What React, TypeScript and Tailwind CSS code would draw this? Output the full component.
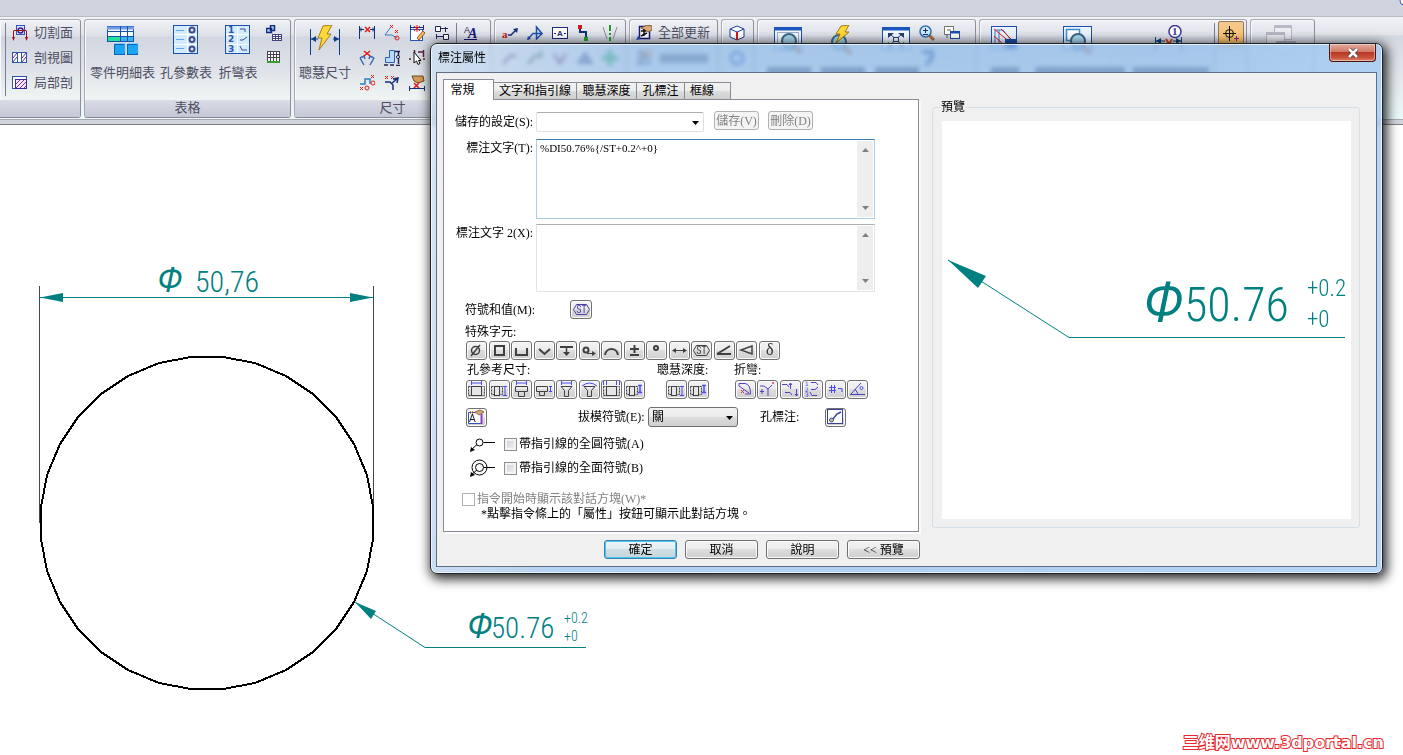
import type { ReactNode } from "react";

type IconProps = { w?: number; h?: number; className?: string; children: ReactNode };

function Icon({ w = 16, h = 16, className = "", children }: IconProps) {
  return (
    <svg width={w} height={h} viewBox={`0 0 ${w} ${h}`} fill="none" aria-hidden="true" className={`shrink-0 ${className}`}>
      {children}
    </svg>
  );
}

/* ---------- ribbon icons ---------- */

const sectionIcon = (
  <Icon>
    <rect x="4.500" y="0.500" width="8" height="9" fill="#dbe4ff" stroke="#3355b5" />
    <circle cx="8.500" cy="5.500" r="2.500" stroke="#4a1a8a" strokeWidth="1.500" />
    <path d="M1.500 6V14M14.500 6V14M1.500 5.500H14.500" stroke="#a01010" />
    <path d="M0 12H3L1.500 16ZM13 12H16L14.500 16Z" fill="#a01010" />
  </Icon>
);

const breakIcon = (
  <Icon>
    <rect x="0.500" y="2.500" width="14" height="10" fill="#fff" stroke="#2d55b0" />
    <path d="M1 8L5 3M1 12L5 7M10 8L14 3M10 12L14 7" stroke="#6a2fb0" />
    <path d="M5.500 3V12M9.500 3V12" stroke="#2d55b0" />
  </Icon>
);

const brokenOutIcon = (
  <Icon>
    <rect x="0.500" y="1.500" width="14" height="12" fill="#fff" stroke="#2d55b0" />
    <rect x="3.500" y="4.500" width="11" height="9" fill="#f3e9ff" stroke="#3b2a95" />
    <path d="M4 9L8 5M4 13L12 5M8 13L14 7M12 13L14 11" stroke="#7a28b8" />
  </Icon>
);

const partsListIcon = (
  <Icon w={32} h={30}>
    <rect x="0.500" y="1.500" width="26" height="15" fill="#f2fbff" stroke="#1c4fae" />
    <rect x="1" y="11" width="13" height="5" fill="#1fe49c" />
    <rect x="14" y="11" width="12" height="5" fill="#39b3ee" />
    <path d="M0 3H27" stroke="#6d9be8" strokeWidth="3" />
    <path d="M0 6.500H27M0 11.500H27M13.500 1V17M20.500 1V17" stroke="#1c4fae" />
    <rect x="7.500" y="19.500" width="10" height="10" fill="#18a5f2" stroke="#0e62bd" />
    <rect x="20.500" y="19.500" width="10" height="10" fill="#18a5f2" stroke="#0e62bd" />
    <path d="M8 18.500H18V28M21 18.500H31V28" stroke="#7fd2ff" />
  </Icon>
);

const holeTableIcon = (
  <Icon w={26} h={30}>
    <rect x="0.500" y="0.500" width="24" height="28" fill="#d3ebff" stroke="#1c4fae" />
    <path d="M14.500 1V28M1 9.500H24M1 19.500H24" stroke="#fff" />
    <path d="M3 5.500H11M3 14.500H11M3 23.500H11" stroke="#5da9ee" />
    <g stroke="#434a86" strokeWidth="2">
      <circle cx="19" cy="5" r="2.500" />
      <circle cx="19" cy="14.500" r="2.500" />
      <circle cx="19" cy="24" r="2.500" />
    </g>
  </Icon>
);

const bendTableIcon = (
  <Icon w={26} h={30}>
    <rect x="0.500" y="0.500" width="24" height="28" fill="#d3ebff" stroke="#1c4fae" />
    <path d="M12.500 1V28M1 9.500H24M1 19.500H24" stroke="#fff" />
    <g fill="#2f57a5" fontFamily="DejaVu Sans" fontWeight="700" fontSize="9">
      <text x="3" y="8">1</text>
      <text x="3" y="17">2</text>
      <text x="3" y="27">3</text>
    </g>
    <path d="M15 4H20V7M15 15H18L22 12M15 21L17 25H22" stroke="#434a86" />
  </Icon>
);

const blockTableIcon = (
  <Icon>
    <path d="M0.500 3.500H5.500V7.500H0.500ZM4.500 0.500H8.500V5.500H4.500Z" fill="#9fd4ff" stroke="#16277c" strokeWidth="1.500" />
    <rect x="6.500" y="9.500" width="9" height="6" fill="#fff" stroke="#43447f" />
    <path d="M6 11.500H16M6 13.500H16M9.500 9V16M12.500 9V16" stroke="#43447f" />
  </Icon>
);

const tableIcon = (
  <Icon>
    <rect x="1.500" y="1.500" width="12" height="11" fill="#fff" stroke="#4b4252" />
    <path d="M1 4.500H14M1 7.500H14M4.500 1V13M7.500 1V13M10.500 1V13" stroke="#4b4252" />
    <path d="M1 12H14" stroke="#3f9c34" strokeWidth="2" />
  </Icon>
);

const smartDimIcon = (
  <Icon w={34} h={32}>
    <path d="M2.500 4V30M31.500 4V30" stroke="#10407f" />
    <path d="M3 14H10M25 14H31" stroke="#10407f" />
    <path d="M3 14L8 11V17ZM31 14L26 11V17Z" fill="#10407f" />
    <path d="M15 1L24 0L19 9H23L11 25L14 13H10Z" fill="#ffd83a" stroke="#a67a10" />
  </Icon>
);

const dimIcons: ReactNode[] = [
  <Icon key="between">
    <path d="M0.500 1V14M15.500 1V14M1 4.500H5M11 4.500H15" stroke="#14307a" />
    <path d="M2 2.500V6.500M14 2.500V6.500" stroke="#14307a" />
    <path d="M6 2L11 7M11 2L6 7" stroke="#e01818" strokeWidth="1.500" />
  </Icon>,
  <Icon key="angleCoord">
    <path d="M1 10L6 3M1 10H8L13 13" stroke="#3a7ac0" />
    <path d="M6 0L9 3M9 0L6 3M11 5L14 8M14 5L11 8" stroke="#e01818" />
    <circle cx="13" cy="13" r="2" stroke="#e01818" />
  </Icon>,
  <Icon key="attach">
    <rect x="1.500" y="4.500" width="12" height="11" fill="#fff" stroke="#2456b0" />
    <path d="M1.500 0V5M14.500 0V5M2 2.500H14" stroke="#14307a" />
    <path d="M5 1L11 6M11 1L5 6M8 0V7" stroke="#e01818" />
    <path d="M8 13L14 6L16 8L10 15Z" fill="#f6bd50" stroke="#a3532a" />
  </Icon>,
  <Icon key="retrieve">
    <path d="M1.500 1.500H6.500V6.500H1.500ZM9.500 9.500H14.500V14.500H9.500Z" fill="#fff" stroke="#23234f" />
    <path d="M7 3.500H14M11.500 2V7M2.500 9V14M2 11.500H9" stroke="#23234f" />
  </Icon>,
  <Icon key="anglebetween">
    <path d="M1 8L5 15M15 8L11 15M1 8L5 6L6 9M15 8L11 6L10 9" stroke="#3769b5" strokeWidth="1.500" />
    <path d="M5 1L11 6M11 1L5 6" stroke="#e01818" strokeWidth="1.500" />
  </Icon>,
  <Icon key="symmetric">
    <path d="M1.500 7.500V12.500H10.500V0.500H5.500V7.500Z" fill="#b9d8f6" stroke="#2a63ad" />
    <path d="M0 15H4M6 15H10M14.500 1V14M11 1.500H16M12 15.500H16" stroke="#23234f" strokeWidth="1.500" />
    <circle cx="14" cy="7" r="1.500" fill="#fff" stroke="#23234f" />
  </Icon>,
  <Icon key="select">
    <path d="M0 9H2M5.500 0V3M14.500 0V7M9 2H14M14 9H16" stroke="#5c2230" strokeWidth="1.500" />
    <path d="M5 2V13L7.500 11L9 14.500L11 13.500L9.500 10.500H12Z" fill="#fff" stroke="#111" />
  </Icon>,
  null,
  <Icon key="coordinate">
    <path d="M1 9H6V4H11V9" stroke="#2d7ec6" strokeWidth="1.500" />
    <path d="M12 0L15 3M15 0L12 3M1 12L4 15M4 12L1 15" stroke="#e01818" />
    <circle cx="14" cy="8" r="2" stroke="#e01818" />
    <circle cx="8" cy="13" r="2" stroke="#e01818" />
  </Icon>,
  <Icon key="chamfer">
    <path d="M1 1L4 4M4 1L1 4M7 1L10 4M10 1L7 4" stroke="#e01818" />
    <path d="M1 7H6L9 10V15M7 9L14 3M9 4L14 3L13 8" stroke="#14307a" strokeWidth="1.500" />
  </Icon>,
  <Icon key="linefit">
    <path d="M3 1H14L15 6L9 8L5 6Z" fill="#d59a55" stroke="#6d4a20" />
    <path d="M5 8L10 13M10 8L5 13" stroke="#e01818" strokeWidth="1.500" />
    <path d="M0.500 11V16M15.500 11V16M1 13.500H15" stroke="#14307a" />
  </Icon>,
  null,
];

const annotationIcons: ReactNode[] = [
  <Icon key="leader">
    <text x="0" y="13" fill="#c01818" fontFamily="Liberation Serif" fontWeight="700" fontSize="11">a</text>
    <path d="M6 10H9L14 5" stroke="#14307a" strokeWidth="1.500" />
    <path d="M16 3L11 4L15 8Z" fill="#14307a" />
  </Icon>,
  <Icon key="balloon">
    <path d="M1 14L6 8.500H15L9.500 2V14L15 8.500" stroke="#1c4fae" strokeWidth="1.500" />
    <path d="M0 15L1 11L4 14Z" fill="#1c4fae" />
  </Icon>,
  <Icon key="frame">
    <rect x="0.500" y="2.500" width="15" height="11" fill="#fff" stroke="#1c2c86" />
    <text x="5" y="11" fill="#1c2c86" fontFamily="Liberation Sans" fontWeight="700" fontSize="8">A</text>
    <path d="M2 8.500H4M12 8.500H14" stroke="#1c2c86" />
  </Icon>,
  <Icon key="connector">
    <path d="M3 2V7H9V13" stroke="#14307a" strokeWidth="2" />
    <rect x="1" y="0" width="4" height="4" fill="#d01919" />
    <rect x="7" y="12" width="4" height="4" fill="#25a52a" />
  </Icon>,
  <Icon key="centerline">
    <path d="M1 2L5 14M15 2L11 14" stroke="#8b8b9b" />
    <path d="M8 0V6M8 8V10M8 12V16" stroke="#1f9c27" strokeWidth="2" />
  </Icon>,
];

const secondRowIcons: ReactNode[] = [
  <Icon key="l1"><path d="M1 14L8 6H15" stroke="#4a1a80" strokeWidth="3" /></Icon>,
  <Icon key="l2"><path d="M1 14L8 6H14V1" stroke="#1f5040" strokeWidth="3" /></Icon>,
  <Icon key="l3"><path d="M2 4L8 13L14 4" stroke="#5a1a60" strokeWidth="3" /></Icon>,
  <Icon key="l4"><path d="M1 13H15L8 3Z" fill="#4656a8" stroke="#14307a" strokeWidth="2" /></Icon>,
  <Icon key="l5"><path d="M8 0V16M0 8H16" stroke="#0f9c47" strokeWidth="5" /></Icon>,
];

const textStyleIcon = (
  <Icon>
    <text x="0" y="8" fill="#23234f" fontFamily="Liberation Sans" fontSize="9">A</text>
    <text x="4" y="13" fill="#16167c" fontFamily="Liberation Serif" fontStyle="italic" fontWeight="700" fontSize="14">A</text>
    <path d="M0 14.500H13" stroke="#16167c" />
  </Icon>
);

const updateIcon = (
  <Icon>
    <rect x="3.500" y="1.500" width="10" height="12" fill="#fff" stroke="#16167c" strokeWidth="1.500" />
    <path d="M5 3L11 0L16 1V5L12 7Z" fill="#d9a877" stroke="#7d5a30" />
    <path d="M5 6H10M8 4V11M5 11L11 8" stroke="#111" strokeWidth="1.500" />
    <path d="M0 15L2 11L5 14Z" fill="#1c4fae" />
  </Icon>
);

const cubeIcon = (
  <Icon>
    <path d="M8 1L15 4V12L8 15L1 12V4Z" fill="#fff" stroke="#1c3fa0" />
    <path d="M1 4L8 7L15 4" stroke="#1c3fa0" />
    <path d="M8 7V15" stroke="#d01919" strokeWidth="2" />
  </Icon>
);

function Magnifier({ x, y }: { x: number; y: number }) {
  return (
    <g>
      <path d={`M${x + 5} ${y + 5}L${x + 12} ${y + 12}`} stroke="#a6623c" strokeWidth="4" />
      <circle cx={x} cy={y} r="7" fill="#a9d8ee" stroke="#3c6b8c" strokeWidth="2" />
    </g>
  );
}

const zoomAreaIcon = (
  <Icon w={32} h={32}>
    <rect x="1.500" y="2.500" width="27" height="22" fill="#f4faff" stroke="#1c4fae" />
    <path d="M1 4H29" stroke="#1c57c0" strokeWidth="3" />
    <rect x="4.500" y="7.500" width="21" height="16" stroke="#9ab0d0" />
    <Magnifier x={16} y={16} />
  </Icon>
);

const zoomToolIcon = (
  <Icon w={32} h={32}>
    <Magnifier x={12} y={17} />
    <path d="M14 1L22 0L18 7H22L9 18L13 9H9Z" fill="#ffd83a" stroke="#a67a10" />
  </Icon>
);

const fitIcon = (
  <Icon w={32} h={32}>
    <rect x="1.500" y="2.500" width="27" height="22" fill="#f4faff" stroke="#1c4fae" />
    <path d="M1 4H29" stroke="#1c57c0" strokeWidth="3" />
    <path d="M9 9L21 20M21 9L9 20" stroke="#20407f" />
    <path d="M7 8H13L7 13ZM23 8H17L23 13ZM7 22H13L7 17ZM23 22H17L23 17Z" fill="#20407f" />
    <rect x="12.500" y="12.500" width="5" height="4" fill="#fff" stroke="#20407f" />
  </Icon>
);

const zoomIcon = (
  <Icon>
    <path d="M10 10L15 15" stroke="#b0663a" strokeWidth="3" />
    <circle cx="6.500" cy="6.500" r="5.500" fill="#cdeaff" stroke="#2f6fb0" strokeWidth="1.500" />
    <path d="M4 5.500H9M6.500 3V8M4 9.500H9" stroke="#1d2b70" />
  </Icon>
);

const cascadeIcon = (
  <Icon>
    <rect x="0.500" y="1.500" width="9" height="8" fill="#fff" stroke="#74747c" />
    <path d="M3 5H7M3 9V13" stroke="#555" />
    <rect x="6.500" y="6.500" width="9" height="7" fill="#fff" stroke="#1c4fae" />
    <path d="M6 7.500H16" stroke="#1c4fae" strokeWidth="2" />
  </Icon>
);

const hatchViewIcon = (
  <Icon w={32} h={32}>
    <rect x="0.500" y="1.500" width="25" height="22" fill="#eaf4ff" stroke="#1c4fae" />
    <path d="M4 5V20H22M4 5H12L24 20M8 5V20" stroke="#3a7ac0" />
    <path d="M3 4L20 18M10 4L24 18M3 11L12 19" stroke="#e01818" />
    <rect x="14" y="14" width="11" height="10" fill="#1c4fae" />
  </Icon>
);

const inspectIcon = (
  <Icon w={32} h={32}>
    <rect x="0.500" y="1.500" width="28" height="23" fill="#eaf4ff" stroke="#1c4fae" />
    <rect x="3.500" y="4.500" width="13" height="11" fill="#fff" stroke="#3a8fd0" strokeWidth="1.500" />
    <Magnifier x={15} y={16} />
  </Icon>
);

const trackDimIcon = (
  <Icon w={32} h={32}>
    <path d="M0.500 12V26M26.500 12V26M1 16H10M18 16H26" stroke="#10407f" />
    <path d="M1 16L6 13V19ZM26 16L21 13V19Z" fill="#10407f" />
    <path d="M11 14L14 19L17 14" stroke="#d2401c" strokeWidth="2" />
    <circle cx="20" cy="6.500" r="6" fill="#fff" stroke="#3a389a" strokeWidth="1.500" />
    <text x="17" y="10" fill="#3a389a" fontFamily="Liberation Serif" fontWeight="700" fontSize="11">1</text>
  </Icon>
);

const crosshairIcon = (
  <Icon w={20} h={20}>
    <circle cx="8.500" cy="9.500" r="4" stroke="#111" />
    <path d="M8.500 2V17M2 9.500H15" stroke="#111" />
    <path d="M15.500 12V17M13 14.500H18" stroke="#8a1a8a" />
  </Icon>
);

const switchWindowIcon = (
  <Icon w={30} h={32} className="opacity-50">
    <rect x="8.500" y="1.500" width="17" height="14" fill="#f3f3fa" stroke="#8c88a2" />
    <path d="M8 2.500H26" stroke="#8c88a2" strokeWidth="3" />
    <rect x="0.500" y="8.500" width="18" height="15" fill="#f3f3fa" stroke="#8c88a2" />
    <path d="M0 9.500H19" stroke="#8c88a2" strokeWidth="3" />
    <rect x="10.500" y="17.500" width="19" height="10" fill="#f3f3fa" stroke="#8c88a2" />
    <path d="M10 18.500H30" stroke="#8c88a2" strokeWidth="3" />
  </Icon>
);

/* ---------- ribbon ---------- */

const GROUP =
  "shrink-0 h-[99px] flex flex-col rounded-[3px] border border-[#a9a9b4] border-r-[#8f8f9b] border-b-[#8a8a96] shadow-[inset_1px_1px_0_#f8f9fb] bg-[linear-gradient(#eff1f5_0px,#dde0e7_16px,#d2d6e1_17px,#dfe3e8_50px,#f0f5f4_80px)] overflow-hidden";

const SEPARATOR = "mt-[3px] h-[73px] w-px shrink-0 bg-[#7b7c93]";

function Group({ className, title, children }: { className: string; title?: string; children: ReactNode }) {
  return (
    <section className={`${GROUP} ${className}`}>
      <div className="flex flex-1">{children}</div>
      <div className="h-[17px] bg-linear-to-b from-[#dadce7] to-[#c4c8d6] text-center leading-4">{title}</div>
    </section>
  );
}

function BigButton({ icon, label, className }: { icon: ReactNode; label: string; className: string }) {
  return (
    <button type="button" className={`flex flex-col items-center pt-[5px] whitespace-nowrap ${className}`}>
      <span className="flex h-9 items-start">{icon}</span>
      <span className="leading-4 pt-1">{label}</span>
    </button>
  );
}

function Ribbon() {
  const sections = [
    { icon: sectionIcon, label: "切割面" },
    { icon: breakIcon, label: "剖視圖" },
    { icon: brokenOutIcon, label: "局部剖" },
  ];

  return (
    <header className="overflow-hidden text-[13px] text-[#4d4e63]">
      <div className="flex h-4 justify-end bg-[#cfd4de]">
        <Icon w={4} h={8}>
          <circle cx="5" cy="1" r="4" fill="#fff" stroke="#3a55c0" />
        </Icon>
      </div>

      <div className="flex h-[103px] gap-[3px] border-t border-[#b9bbbf] bg-[linear-gradient(#f1f2f6_0px,#e2e4ea_18px,#d3d7e1_19px,#e4e8ec_60px,#eaf8f8_100px)] pt-[2px]">
        <Group className="w-[81px] border-l-0 rounded-l-none">
          <div className={`ml-[5px] ${SEPARATOR}`} />
          <div className="flex flex-col gap-[9px] pl-[6px] pt-[5px]">
            {sections.map((item) => (
              <button key={item.label} type="button" className="flex h-4 items-center gap-[6px]">
                {item.icon}
                {item.label}
              </button>
            ))}
          </div>
        </Group>

        <Group className="w-[207px]" title="表格">
          <BigButton icon={partsListIcon} label="零件明細表" className="w-[75px]" />
          <BigButton icon={holeTableIcon} label="孔參數表" className="w-[52px]" />
          <BigButton icon={bendTableIcon} label="折彎表" className="w-[52px]" />
          <div className="flex flex-col gap-[9px] pl-[2px] pt-[5px]">
            <button type="button" aria-label="塊表格">{blockTableIcon}</button>
            <button type="button" aria-label="表格">{tableIcon}</button>
          </div>
        </Group>

        <Group className="w-[197px]" title="尺寸">
          <BigButton icon={smartDimIcon} label="聰慧尺寸" className="w-[60px]" />
          <div className="grid grid-cols-4 content-start gap-[9px] pl-[4px] pt-[5px]">
            {dimIcons.map((icon, i) => (
              <span key={i} className="h-4 w-4">{icon}</span>
            ))}
          </div>
          <div className={`ml-[6px] ${SEPARATOR}`} />
          <div className="pl-[7px] pt-[5px]">{textStyleIcon}</div>
        </Group>

        <Group className="w-[132px]">
          <div className="grid flex-1 grid-cols-5 content-start justify-items-center gap-y-[9px] px-[2px] pt-[5px]">
            {annotationIcons}
            {secondRowIcons}
          </div>
        </Group>

        <Group className="w-[89px]">
          <div className="flex flex-col gap-[9px] pl-[6px] pt-[5px]">
            <button type="button" className="flex h-4 items-center gap-[6px]">
              {updateIcon}
              全部更新
            </button>
            <div className="flex h-4 items-center gap-[8px]">
              {updateIcon}
              <span className="h-[9px] w-12 bg-[#2d3a5a]/70" />
            </div>
          </div>
        </Group>

        <Group className="w-[33px]">
          <div className="flex flex-col gap-[9px] pl-[7px] pt-[5px]">
            {cubeIcon}
            <Icon>
              <circle cx="8" cy="8" r="6" stroke="#2a58b8" strokeWidth="3" />
            </Icon>
          </div>
        </Group>

        <Group className="w-[219px]">
          <div className="flex gap-[22px] pl-[15px] pt-[5px]">
            {[zoomAreaIcon, zoomToolIcon, fitIcon].map((icon, i) => (
              <div key={i} className="flex w-8 flex-col items-center gap-[10px]">
                {icon}
                <span className="h-[10px] w-11 shrink-0 bg-[#1d2a4a]/80" />
              </div>
            ))}
          </div>
          <div className="pl-[6px] pt-[5px]">
            {zoomIcon}
            <Icon className="mt-[9px]">
              <path d="M3 2H13V8L7 15" stroke="#1a4c9e" strokeWidth="4" />
            </Icon>
          </div>
          <div className="pl-[9px] pt-[5px]">{cascadeIcon}</div>
        </Group>

        <Group className="w-[268px]">
          <div className="flex pl-[11px] pt-[5px]">
            <div className="flex w-[72px] flex-col gap-[10px]">
              {hatchViewIcon}
              <span className="h-[10px] w-7 bg-[#1d2a4a]/80" />
            </div>
            <div className="flex w-[92px] flex-col gap-[10px]">
              {inspectIcon}
              <span className="-ml-[28px] h-[10px] w-[90px] bg-[#1d2a4a]/80" />
            </div>
            <div className="flex w-[59px] flex-col gap-[10px]">
              {trackDimIcon}
              <span className="-ml-[22px] h-[10px] w-[76px] bg-[#1d2a4a]/80" />
            </div>
          </div>
          <div className={SEPARATOR} />
          <button type="button" aria-label="智慧點選" className="ml-[3px] mt-[1px] flex h-[26px] w-[26px] shrink-0 items-center justify-center rounded-[2px] border border-[#8e7a5c] bg-linear-to-b from-[#f2c98f] to-[#ffc05c]">
            {crosshairIcon}
          </button>
        </Group>

        <Group className="w-[65px]">
          <div className="pl-[15px] pt-[4px]">{switchWindowIcon}</div>
        </Group>
      </div>
      <div className="h-[6px] border-b border-t border-b-[#7f7f86] border-t-[#a8a8b2] bg-[#d0d4dd]" />
    </header>
  );
}

/* ---------- drafting sheet ---------- */

const DRAFT_FONT = "Roboto Condensed, Liberation Sans Narrow, sans-serif";

// the CAD display draws the circle as a faceted polygon
const circlePoints = Array.from({ length: 32 }, (_, i) => {
  const a = ((i + 0.5) * Math.PI * 2) / 32;
  return `${Math.round(207 + 167 * Math.cos(a))},${Math.round(398 + 167 * Math.sin(a))}`;
}).join(" ");

function DiameterMark({ x, y, size }: { x: number; y: number; size: number }) {
  return (
    <text x={x} y={y} fontFamily="Open Sans, sans-serif" fontStyle="italic" fontWeight="400" fontSize={size}>
      Φ
    </text>
  );
}

function Sheet() {
  return (
    <svg width="640" height="600" viewBox="0 0 640 600" fill="none" className="block" role="img" aria-label="工程圖">
      <path d="M39.500 161V398M373.500 161V398" stroke="#3c4a4a" />
      <path d="M40 172.500H373" stroke="#008080" />
      <path d="M40 172.500L63 168V177ZM373 172.500L350 168V177Z" fill="#008080" />
      <polygon points={circlePoints} stroke="#000" strokeWidth="2" shapeRendering="crispEdges" />
      <path d="M355 477L425 522.500H586" stroke="#008080" />
      <path d="M355 477L376 486L371 494Z" fill="#008080" />
      <g fill="#008080" fontFamily={DRAFT_FONT} fontWeight="300">
        <DiameterMark x={157} y={167} size={34} />
        <text x="195" y="167" fontSize="30">50,76</text>
        <DiameterMark x={467} y={513} size={34} />
        <text x="491" y="513" fontSize="29">50.76</text>
        <text x="564" y="498" fontSize="14">+0.2</text>
        <text x="564" y="516" fontSize="14">+0</text>
      </g>
    </svg>
  );
}

/* ---------- dialog ---------- */

const BTN =
  "flex items-center justify-center rounded-[3px] border border-[#707070] bg-[linear-gradient(#f3f3f3,#ebebeb_50%,#dddddd_50%,#cfcfcf)] shadow-[inset_0_0_0_1px_#fbfbfb]";

function GlyphButton({ label, children }: { label: string; children: ReactNode }) {
  return (
    <button type="button" title={label} aria-label={label} className={`${BTN} h-[19px] w-[21px] shrink-0`}>
      <svg width="21" height="19" viewBox="0 0 21 19" fill="none" className="shrink-0" stroke="#404040">
        {children}
      </svg>
    </button>
  );
}

function StGlyph({ color }: { color: string }) {
  return (
    <g>
      <path d="M5.500 4.500H15.500L18.500 9.500L15.500 14.500H5.500L2.500 9.500Z" stroke={color} />
      <text x="10.500" y="13" textAnchor="middle" stroke="none" fill={color} fontFamily="Roboto Condensed, Liberation Sans" fontSize="10">
        ST
      </text>
    </g>
  );
}

const specialGlyphs: { label: string; art: ReactNode }[] = [
  { label: "直徑", art: <path d="M13.500 9.500A4 4 0 1 1 5.500 9.500A4 4 0 1 1 13.500 9.500M5 15L14 4" strokeWidth="1.500" /> },
  { label: "方形", art: <rect x="6" y="5" width="9" height="9" strokeWidth="2" /> },
  { label: "沉頭孔", art: <path d="M5 7V14H16V7" strokeWidth="2" /> },
  { label: "埋頭孔", art: <path d="M5 8L10.500 13L16 8" strokeWidth="2" /> },
  {
    label: "深度",
    art: (
      <g>
        <path d="M4 6H17" strokeWidth="2" />
        <path d="M10.500 6V14" strokeWidth="1.500" />
        <path d="M7 11H14L10.500 15Z" fill="#404040" stroke="none" />
      </g>
    ),
  },
  {
    label: "起始",
    art: (
      <g>
        <circle cx="7" cy="9" r="2.500" strokeWidth="2" />
        <path d="M8 12.500H16" />
        <path d="M13 10L17 12.500L13 15Z" fill="#404040" stroke="none" />
      </g>
    ),
  },
  { label: "弧長", art: <path d="M4 14C5 6 16 6 17 14" strokeWidth="2" /> },
  { label: "正負", art: <path d="M6 8H15M10.500 4V12M6 14H15" strokeWidth="2" /> },
  { label: "度", art: <circle cx="10" cy="7" r="2" strokeWidth="2" /> },
  {
    label: "之間",
    art: (
      <g>
        <path d="M5 9.500H16" />
        <path d="M3 9.500L7 7V12ZM18 9.500L14 7V12Z" fill="#404040" stroke="none" />
      </g>
    ),
  },
  { label: "特殊符號", art: <StGlyph color="#404040" /> },
  { label: "斜度", art: <path d="M3 13H17M3 13L16 5" strokeWidth="2" /> },
  { label: "錐度", art: <path d="M16 5L5 9L16 13Z" strokeWidth="1.500" /> },
  {
    label: "公差",
    art: (
      <text x="7" y="14" stroke="none" fill="#303030" fontFamily="Liberation Serif" fontSize="16">
        δ
      </text>
    ),
  },
];

const topDim = <path d="M5.500 1V5M15.500 1V5M5 3H16" stroke="#4a4af0" />;
const sideDim = <path d="M14 6.500H18M14 15.500H18M16 6V16" stroke="#4a4af0" />;
const shortSideDim = <path d="M14 5.500H18M14 12.500H18M16 5V13" stroke="#4a4af0" strokeWidth="1.500" />;
const wideHole = (
  <g>
    <rect x="2.500" y="6.500" width="16" height="9" strokeDasharray="2 1" />
    <rect x="5.500" y="6.500" width="10" height="9" fill="#e6e6e6" />
  </g>
);
const narrowHole = (
  <g>
    <rect x="2.500" y="6.500" width="11" height="8" strokeDasharray="2 1" />
    <rect x="5.500" y="6.500" width="5" height="9" fill="#e6e6e6" />
  </g>
);
const funnel = <path d="M5 6.500H16L12.500 10.500V16.500H8.500V10.500L5 6.500" />;

const holeGlyphs: { label: string; art: ReactNode }[] = [
  { label: "孔直徑", art: <g>{wideHole}{topDim}</g> },
  { label: "孔深度", art: <g>{narrowHole}{sideDim}</g> },
  { label: "沉頭直徑", art: <g><path d="M4.500 6.500H16.500V11.500H4.500ZM7.500 11.500H13.500V16.500H7.500Z" />{topDim}</g> },
  { label: "沉頭深度", art: <g><path d="M2.500 6.500H13.500V11.500H2.500ZM5.500 11.500H10.500V15.500H5.500Z" /><path d="M15 6.500H18M15 11.500H18M16.500 6V12" stroke="#4a4af0" /></g> },
  { label: "埋頭直徑", art: <g>{funnel}{topDim}</g> },
  { label: "埋頭角度", art: <g>{funnel}<path d="M3 6Q10.500 0 18 6" stroke="#4a4af0" /></g> },
  { label: "螺紋尺寸", art: <g>{wideHole}<path d="M2.500 1V5M5.500 1V5M15.500 1V5M18.500 1V5" stroke="#4a4af0" /></g> },
  { label: "螺紋深度", art: <g>{narrowHole}{shortSideDim}</g> },
];

const depthGlyphs = [holeGlyphs[1], holeGlyphs[7]];

const bendGlyphs: { label: string; art: ReactNode }[] = [
  { label: "折彎半徑", art: <g stroke="#5a3fc0"><path d="M4 3.500H10Q15.500 4 15.500 14H10M4 3.500V6L14 13" /><path d="M6 10L9 13M9 10L6 13" stroke="#d03030" /></g> },
  { label: "折彎角度", art: <g stroke="#5a3fc0"><path d="M3 6H7L11 9V16M11 9L15 5M3 11.500H7M5 9V14" /><rect x="15" y="2" width="2" height="2" fill="#d07080" stroke="none" /></g> },
  { label: "折彎方向", art: <g stroke="#5a3fc0"><path d="M2 4.500H7L9 7M5 12.500H10L12 15M10.500 3V9M9 5L10.500 3L12 5M16.500 9V16M15 14L16.500 16L18 14" /></g> },
  {
    label: "折彎順序",
    art: (
      <g stroke="#5a3fc0">
        <path d="M9 2.500H14L16 5M9 9.500H13L16 7M8 12L10 15.500H15" />
        <g fontSize="6" fontFamily="DejaVu Sans" fill="#4a4af0" stroke="none">
          <text x="3" y="6">1</text>
          <text x="3" y="12">2</text>
          <text x="3" y="17">3</text>
        </g>
      </g>
    ),
  },
  { label: "折彎編號", art: <g stroke="#4a4af0"><path d="M6.500 5V13M9.500 5V13M4 7.500H11M4 10.500H11M13 8.500H17V12" /></g> },
  { label: "折彎夾角", art: <g stroke="#4a3fc0"><path d="M3 14.500H18M4 14L14 3M8 9L11 14" /><circle cx="14.500" cy="8" r="1.500" stroke="#4a4af0" /></g> },
];

function GlyphRow({ items, className }: { items: { label: string; art: ReactNode }[]; className: string }) {
  return (
    <div className={`flex justify-between ${className}`}>
      {items.map((item) => (
        <GlyphButton key={item.label} label={item.label}>
          {item.art}
        </GlyphButton>
      ))}
    </div>
  );
}

function ScrollTextArea({ id, value, className }: { id: string; value: string; className: string }) {
  return (
    <div className={`flex w-[339px] border bg-white ${className}`}>
      <textarea id={id} defaultValue={value} className="flex-1 resize-none overflow-hidden px-[3px] text-[11px] leading-4 outline-none" />
      <div className="m-px flex w-4 flex-col items-center justify-between bg-[#eeeeee] py-[7px]">
        <svg width="7" height="4" viewBox="0 0 7 4" aria-hidden="true"><path d="M0 4L3.500 0L7 4Z" fill="#808080" /></svg>
        <svg width="7" height="4" viewBox="0 0 7 4" aria-hidden="true"><path d="M0 0L3.500 4L7 0Z" fill="#808080" /></svg>
      </div>
    </div>
  );
}

function Arrow() {
  return (
    <svg width="7" height="4" viewBox="0 0 7 4" aria-hidden="true" className="pointer-events-none absolute right-[5px] top-[9px]">
      <path d="M0 0L3.500 4L7 0Z" fill="#000" />
    </svg>
  );
}

const CHECK = "h-[13px] w-[13px] shrink-0 appearance-none border bg-white";
const CHECK_ON = "border-[#8e8f8f] shadow-[inset_0_0_0_2px_#f4f4f4] bg-linear-to-br from-[#cbcfd5] to-[#f6f6f6]";
const DISABLED_BTN = "mb-[3px] h-[19px] w-[45px] rounded-[3px] border border-[#adb2b5] bg-[#f4f4f4] leading-4 text-[#838383]";

function DialogForm() {
  return (
    <form className="h-[433px] border border-[#898c95] bg-white pt-[12px] shadow-[2px_2px_0_#fafafa]" onSubmit={(e) => e.preventDefault()}>
      <div className="flex h-5 items-center">
        <label htmlFor="saved" className="w-[89px] text-right">儲存的設定(S):</label>
        <div className="relative ml-[3px] w-[168px]">
          <select id="saved" className="h-5 w-full appearance-none rounded-[2px] border border-[#dde0e6] border-t-[#abadb3] bg-white px-1 outline-none" />
          <Arrow />
        </div>
        <button type="button" disabled className={`ml-[10px] ${DISABLED_BTN}`}>儲存(V)</button>
        <button type="button" disabled className={`ml-[9px] ${DISABLED_BTN}`}>刪除(D)</button>
      </div>

      <div className="mt-[7px] flex items-start gap-[3px]">
        <label htmlFor="callout" className="w-[89px] pt-px text-right leading-4">標注文字(T):</label>
        <ScrollTextArea id="callout" value="%DI50.76%{/ST+0.2^+0}" className="h-20 border-[#a9cfe8] border-t-[#3d7bad]" />
      </div>
      <div className="mt-[5px] flex items-start gap-[3px]">
        <label htmlFor="callout2" className="w-[89px] pt-px text-right leading-4">標注文字 2(X):</label>
        <ScrollTextArea id="callout2" value="" className="h-[68px] border-[#e2e3ea] border-t-[#abadb3]" />
      </div>

      <div className="mt-[8px] flex h-[19px] items-center pl-[21px]">
        <span className="w-[105px]">符號和值(M):</span>
        <button type="button" aria-label="符號和值" className={`${BTN} h-[19px] w-[22px]`}>
          <svg width="21" height="19" viewBox="0 0 21 19" fill="none" className="shrink-0">
            <StGlyph color="#4a3fa0" />
          </svg>
        </button>
      </div>

      <div className="mt-[5px] pl-[21px] leading-4">特殊字元:</div>
      <GlyphRow items={specialGlyphs} className="ml-[22px] mt-px w-[314px]" />

      <div className="mt-[2px] flex pl-[23px] leading-4">
        <span className="w-[190px]">孔參考尺寸:</span>
        <span className="w-[77px]">聰慧深度:</span>
        <span>折彎:</span>
      </div>
      <div className="mt-[2px] flex pl-[22px]">
        <GlyphRow items={holeGlyphs} className="w-[179px]" />
        <GlyphRow items={depthGlyphs} className="ml-[21px] w-[43px]" />
        <GlyphRow items={bendGlyphs} className="ml-[26px] w-[133px]" />
      </div>

      <div className="mt-[8px] flex h-5 items-center pl-[22px]">
        <GlyphButton label="字元對應">
          <path d="M2.500 4.500H15.500V15.500H2.500Z" fill="#fff" stroke="#3050b0" />
          <path d="M15.500 6V16" stroke="#8a3fc0" strokeWidth="2" />
          <text x="3" y="14" stroke="none" fill="#222" fontFamily="Liberation Sans" fontSize="10">A</text>
          <path d="M9 4L14 2L18 4L13 7Z" fill="#d9a877" stroke="#8a6a50" />
          <path d="M4 3L7 6M7 3L4 6" stroke="#e09030" />
        </GlyphButton>
        <label htmlFor="draft" className="ml-[91px] w-[70px]">拔模符號(E):</label>
        <div className="relative w-[90px]">
          <select id="draft" className="h-5 w-full appearance-none rounded-[3px] border border-[#707070] bg-[linear-gradient(#f3f3f3,#ebebeb_50%,#dddddd_50%,#cfcfcf)] px-[3px] outline-none">
            <option>關</option>
            <option>開</option>
          </select>
          <Arrow />
        </div>
        <span className="ml-[22px] w-[65px]">孔標注:</span>
        <GlyphButton label="孔標注">
          <rect x="2.500" y="1.500" width="15" height="14" fill="#fff" stroke="#3a3fa0" />
          <circle cx="6.500" cy="12" r="2" fill="#bbb" stroke="#555" />
          <path d="M8 11L12 6L16 4" stroke="#3a3fa0" strokeWidth="1.500" />
        </GlyphButton>
      </div>

      <div className="mt-[9px] flex h-4 items-center pl-[25px]">
        <Icon w={28} h={18}>
          <path d="M2 15L8 9.500M14.500 7.500H26" stroke="#000" />
          <path d="M1 17L2 12L6 15Z" fill="#000" />
          <circle cx="10.500" cy="7.500" r="3.500" stroke="#000" />
        </Icon>
        <label className="ml-[7px] flex items-center gap-[2px]">
          <input type="checkbox" className={`${CHECK} ${CHECK_ON}`} />
          帶指引線的全圓符號(A)
        </label>
      </div>
      <div className="mt-[8px] flex h-4 items-center pl-[25px]">
        <Icon w={28} h={18}>
          <path d="M2 16L8 11M14.500 8.500H26" stroke="#000" />
          <path d="M1 18L2 13L6 16Z" fill="#000" />
          <circle cx="10.500" cy="8.500" r="4" stroke="#000" />
          <circle cx="10.500" cy="8.500" r="7.500" stroke="#000" />
        </Icon>
        <label className="ml-[7px] flex items-center gap-[2px]">
          <input type="checkbox" className={`${CHECK} ${CHECK_ON}`} />
          帶指引線的全面符號(B)
        </label>
      </div>

      <label className="mt-[16px] flex h-[14px] items-center gap-[2px] pl-[18px] text-[#838383]">
        <input type="checkbox" disabled className={`${CHECK} border-[#b1b1b1]`} />
        指令開始時顯示該對話方塊(W)*
      </label>
      <p className="pl-[37px] leading-4">*點擊指令條上的「屬性」按鈕可顯示此對話方塊。</p>
    </form>
  );
}

function Preview() {
  return (
    <fieldset className="ml-[13px] mr-[16px] mt-[22px] h-[427px] min-w-0 flex-1 rounded-[3px] border border-[#d5dfe5] pl-[9px] pr-[8px]">
      <legend className="-ml-[2px] px-px leading-3">預覽</legend>
      <div className="mt-[8px] h-[398px] bg-white">
        <svg viewBox="0 0 409 398" fill="none" className="h-full w-full" role="img" aria-label="標注預覽">
          <path d="M6 139L127 216.500H403" stroke="#008080" />
          <path d="M6 139L44 155L36 167Z" fill="#008080" />
          <g fill="#008080" fontFamily={DRAFT_FONT} fontWeight="300">
            <DiameterMark x={201} y={200} size={54} />
            <text x="242" y="200" fontSize="48">50.76</text>
            <text x="365" y="175" fontSize="23">+0.2</text>
            <text x="365" y="206" fontSize="23">+0</text>
          </g>
        </svg>
      </div>
    </fieldset>
  );
}

function CalloutDialog() {
  const tabs = [
    { label: "文字和指引線", className: "w-[83px]" },
    { label: "聰慧深度", className: "w-[60px]" },
    { label: "孔標注", className: "w-[48px]" },
    { label: "框線", className: "w-[46px] pr-[11px]" },
  ];
  const actions = ["取消", "說明", "<< 預覽"];

  return (
    <div
      role="dialog"
      aria-label="標注屬性"
      className="absolute left-[430px] right-5 top-[43px] rounded-[7px] border border-[#1d242c] bg-[linear-gradient(100deg,rgba(205,222,240,0.75)_0%,rgba(150,192,236,0.72)_22%,rgba(148,190,236,0.74)_70%,rgba(172,208,246,0.85)_100%)] px-[5px] pb-[6px] text-xs text-black shadow-[inset_0_0_0_1px_rgba(255,255,255,0.7),2px_3px_12px_2px_rgba(0,0,0,0.85)] backdrop-blur-[2px]"
    >
      <div className="flex h-7 items-center justify-between pl-[2px]">
        <h1 className="font-normal">標注屬性</h1>
        <button type="button" aria-label="關閉" className="mr-px flex h-[18px] w-[47px] items-center justify-center self-start rounded-b-[4px] border border-t-0 border-[#4a1512] bg-[linear-gradient(#e4aa9c,#d27a68_45%,#b93822_50%,#c9523c_80%,#dd8a74)] shadow-[inset_0_0_0_1px_rgba(255,255,255,0.4)]">
          <svg width="12" height="10" viewBox="0 0 12 10" aria-hidden="true">
            <path d="M2 1L10 9M10 1L2 9" stroke="#4c3a40" strokeWidth="4" />
            <path d="M2 1L10 9M10 1L2 9" stroke="#fff" strokeWidth="2.500" />
          </svg>
        </button>
      </div>

      <div className="flex border border-[#5c6f86] bg-[#f0f0f0] pb-[7px] pl-[6px] pt-[6px]">
        <div className="w-[476px] shrink-0">
          <div role="tablist" className="relative -mb-px flex h-[21px] items-end">
            <button type="button" role="tab" aria-selected="true" className="h-[21px] w-[51px] border border-b-0 border-[#898c95] bg-white pb-px pr-3">常規</button>
            {tabs.map((tab) => (
              <button
                key={tab.label}
                type="button"
                role="tab"
                aria-selected="false"
                className={`h-[18px] whitespace-nowrap border border-l-0 border-[#898c95] bg-[linear-gradient(#f2f2f2,#ebebeb_50%,#dddddd_50%,#cfcfcf)] leading-4 ${tab.className}`}
              >
                {tab.label}
              </button>
            ))}
          </div>

          <DialogForm />

          <div className="-mr-px mt-[8px] flex justify-end gap-2">
            <button type="button" className="h-[19px] w-[73px] rounded-[3px] border border-[#3c7fb1] bg-[linear-gradient(#eef4f7,#e2edf2_50%,#cfdde4_50%,#c5d3da)] leading-4 shadow-[inset_0_0_0_1px_#46c8f0]">確定</button>
            {actions.map((action) => (
              <button key={action} type="button" className={`${BTN} h-[19px] w-[73px]`}>{action}</button>
            ))}
          </div>
        </div>

        <Preview />
      </div>
    </div>
  );
}

export default function App() {
  return (
    <main className="relative flex min-h-screen flex-col overflow-hidden bg-white font-['Liberation_Serif','Noto_Sans_CJK_TC',serif]">
      <Ribbon />
      <Sheet />
      <CalloutDialog />
      <a
        href="#"
        className="absolute bottom-[2px] right-[19px] whitespace-nowrap font-['DejaVu_Sans','Noto_Sans_CJK_SC',sans-serif] text-base leading-5 font-bold text-white [-webkit-text-stroke:2px_#e8262c] [paint-order:stroke_fill]"
      >
        三维网www.3dportal.cn
      </a>
    </main>
  );
}
